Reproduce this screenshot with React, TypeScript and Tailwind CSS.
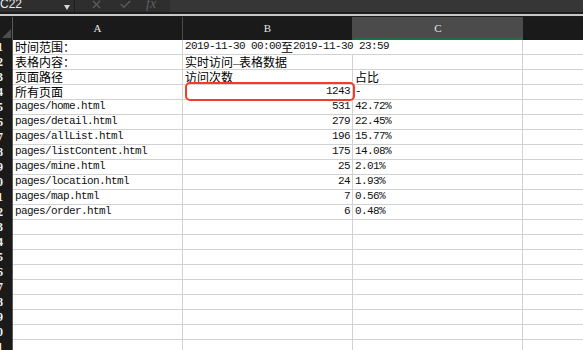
import { X, Check } from "lucide-react";

type Row = { a?: string; b?: string; c?: string; bRight?: boolean; spill?: boolean };

const rows: Row[] = [
  { a: "时间范围：", b: "2019-11-30 00:00至2019-11-30 23:59", spill: true },
  { a: "表格内容：", b: "实时访问_表格数据" },
  { a: "页面路径", b: "访问次数", c: "占比" },
  { a: "所有页面", b: "1243", c: "-", bRight: true },
  { a: "pages/home.html", b: "531", c: "42.72%", bRight: true },
  { a: "pages/detail.html", b: "279", c: "22.45%", bRight: true },
  { a: "pages/allList.html", b: "196", c: "15.77%", bRight: true },
  { a: "pages/listContent.html", b: "175", c: "14.08%", bRight: true },
  { a: "pages/mine.html", b: "25", c: "2.01%", bRight: true },
  { a: "pages/location.html", b: "24", c: "1.93%", bRight: true },
  { a: "pages/map.html", b: "7", c: "0.56%", bRight: true },
  { a: "pages/order.html", b: "6", c: "0.48%", bRight: true },
];

const allRows: Row[] = [...rows, ...Array.from({ length: 9 }, () => ({}))];

// CJK glyphs are full width, latin half width, like SimSun in the sheet
function Txt({ s }: { s?: string }) {
  if (!s) return null;
  const parts = s.split(/([\u3000-\u9fff\uff00-\uffef]+)/).filter(Boolean);
  return (
    <>
      {parts.map((p, i) =>
        /[\u3000-\u9fff\uff00-\uffef]/.test(p) ? (
          <span key={i} className="font-['Noto_Sans_CJK_SC',sans-serif] text-[12px] leading-[13px]">{p}</span>
        ) : (
          <span key={i} className="font-['Liberation_Mono',monospace] text-[11px] leading-[13px] tracking-[-0.6px] text-[#111]">{p}</span>
        )
      )}
    </>
  );
}

export default function App() {
  return (
    <div className="relative w-[583px] h-[350px] overflow-hidden bg-white select-none">
      {/* formula bar */}
      <div className="flex h-[12px] bg-[#2e2e2e]">
        <div className="relative flex w-[75px] items-start border-r border-[#1e1e1e]">
          <span className="-mt-[3px] font-['Liberation_Sans',sans-serif] text-[12px] leading-[14px] text-[#e8e8e8]">C22</span>
          <span className="absolute left-[64px] top-[5px] h-0 w-0 border-x-[3.5px] border-t-[5px] border-x-transparent border-t-[#d8d8d8]" />
        </div>
        <div className="flex w-[95px] items-start text-[#5e5e5e]">
          <X size={13} strokeWidth={2.2} className="ml-[15px] -mt-[2px]" />
          <Check size={13} strokeWidth={2.2} className="ml-[16px] -mt-[2px]" />
          <span className="ml-[14px] -mt-[3px] font-['Liberation_Serif',serif] text-[14px] italic leading-[14px]">fx</span>
        </div>
        <div className="flex-1 bg-[#363636]" />
      </div>
      <div className="h-[2px] bg-[#1c1c1c]" />
      <div className="h-[2px] bg-[#c8c8c8]" />
      <div className="h-[1px] bg-[#1c1c1c]" />

      {/* column headers */}
      <div className="flex h-[23px] bg-[#1a1a1a] font-['Liberation_Serif',serif] text-[11px] text-[#e6e6e6]">
        <div className="relative w-[13px] border-r border-[#5a5a5a]">
          <span className="absolute right-[1px] bottom-[2px] h-0 w-0 border-b-[9px] border-l-[9px] border-b-[#4c4c4c] border-l-transparent" />
        </div>
        <div className="flex w-[170px] items-center justify-center border-r border-[#4a4a4a]">A</div>
        <div className="flex w-[170px] items-center justify-center border-r border-[#4a4a4a]">B</div>
        <div className="flex w-[170px] items-center justify-center border-b-2 border-[#1e6f45] bg-[#4b4b4b] pt-[2px]">C</div>
        <div className="flex-1" />
      </div>

      {/* grid */}
      {allRows.map((r, i) => (
        <div key={i} className="flex h-[15px] text-black">
          <div className="flex w-[13px] justify-end overflow-hidden bg-[#1a1a1a] pr-[9px] border-r border-[#5a5a5a]">
            <span className="whitespace-nowrap font-['Liberation_Serif',serif] text-[12px] font-bold leading-[15px] text-[#f0f0f0]">{i + 1}</span>
          </div>
          <div className="flex w-[170px] items-end border-b border-r border-[#d2d2d2] pl-[2px] pb-[1px] whitespace-nowrap leading-[13px]">
            <Txt s={r.a} />
          </div>
          <div
            className={`relative z-10 flex w-[170px] items-end border-b border-[#d2d2d2] pb-[1px] whitespace-nowrap leading-[13px] ${
              r.spill ? "" : "border-r"
            } ${r.bRight ? "justify-end pr-[2px]" : "pl-[2px]"}`}
          >
            <Txt s={r.b} />
          </div>
          <div className="flex w-[170px] items-end border-b border-r border-[#d2d2d2] pl-[2px] pb-[1px] whitespace-nowrap leading-[13px]">
            <Txt s={r.c} />
          </div>
          <div className="flex-1 border-b border-[#d2d2d2]" />
        </div>
      ))}

      {/* highlight box around total */}
      <div className="absolute left-[185px] top-[82px] z-20 h-[19px] w-[170px] rounded-[5px] border-2 border-[#ef3e2c]" />
    </div>
  );
}
